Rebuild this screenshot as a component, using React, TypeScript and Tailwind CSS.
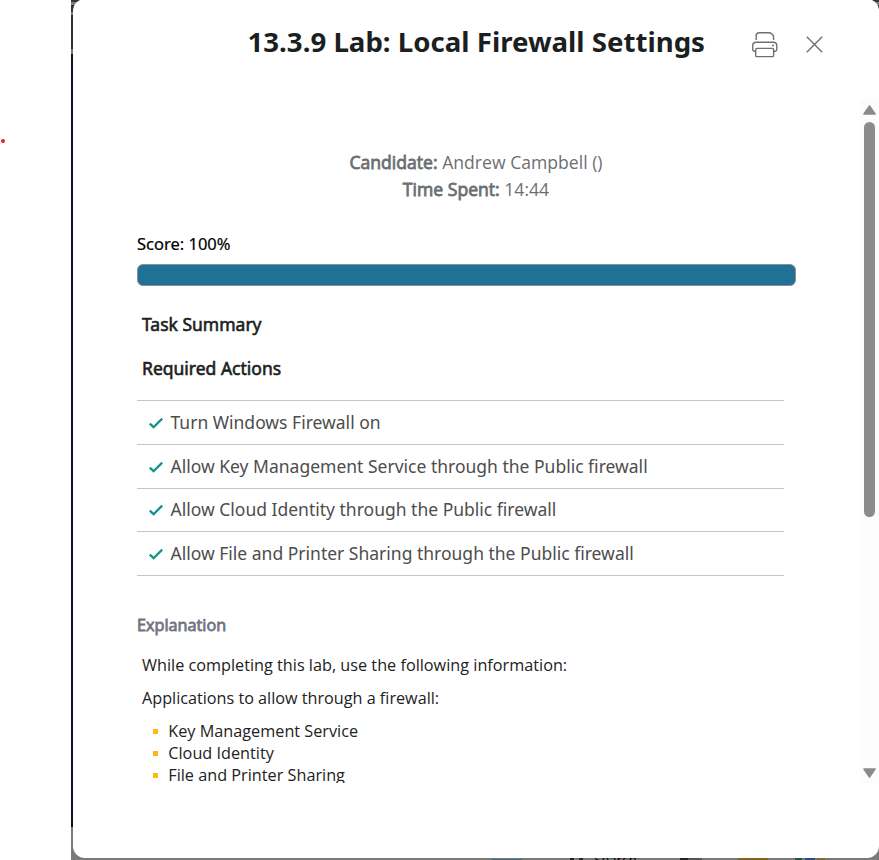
const actions = [
  { text: 'Turn Windows Firewall on', height: 'h-11', nudge: '' },
  { text: 'Allow Key Management Service through the Public firewall', height: 'h-11', nudge: '' },
  { text: 'Allow Cloud Identity through the Public firewall', height: 'h-[43px]', nudge: 'pb-px' },
  { text: 'Allow File and Printer Sharing through the Public firewall', height: 'h-11', nudge: '' },
];

const applications = ['Key Management Service', 'Cloud Identity', 'File and Printer Sharing'];

function PrinterIcon() {
  return (
    <svg className="h-[26px] w-[26px]" viewBox="0 0 26 26" fill="none" stroke="#6c7074" strokeWidth="1.4">
      <path d="M4.2 8V3.5Q4.2.7 7 .7H17.2Q18.6.7 19.6 1.7L20.7 2.8Q21.6 3.7 21.6 5V8" />
      <path d="M3.6 19.2H2.4Q.7 19.2.7 17.5V13.7Q.7 10.3 4.1 10.3H21.4Q24.8 10.3 24.8 13.7V17.5Q24.8 19.2 23.1 19.2H22" />
      <rect x="3.7" y="16.4" width="17.9" height="8.2" rx="1.2" />
      <circle cx="21" cy="13.5" r="1" fill="#6c7074" stroke="none" />
    </svg>
  );
}

function Header() {
  return (
    <header className="flex h-[99px] shrink-0 items-start">
      <h1 className="ml-[174.5px] mt-[21px] w-[504.5px] whitespace-nowrap text-[27.63px] font-bold leading-10 text-[#1b1f22]">
        13.3.9 Lab: Local Firewall Settings
      </h1>
      <button className="mt-8" aria-label="Print">
        <PrinterIcon />
      </button>
      <button className="ml-7 mt-9" aria-label="Close">
        <svg className="h-[17px] w-[17px]" viewBox="0 0 17 17" fill="none" stroke="#6c7074" strokeWidth="1.4">
          <path d="M.8.8 16.2 16.2M16.2.8.8 16.2" />
        </svg>
      </button>
    </header>
  );
}

function Scrollbar() {
  return (
    <div className="flex w-[19px] shrink-0 flex-col items-start bg-[#fcfcfc] pl-[3px]">
      <svg className="mt-[6px] h-[11px] w-[13px]" viewBox="0 0 13 11">
        <path d="M6.5 1 12 9H1Z" fill="#8b8b8b" stroke="#8b8b8b" strokeWidth="1.6" strokeLinejoin="round" />
      </svg>
      <div className="ml-px mt-[6px] h-[395px] w-[11px] rounded-full bg-[#8b8b8b]" />
      <svg className="mt-[250px] h-[11px] w-[13px]" viewBox="0 0 13 11">
        <path d="M6.5 10 12 2H1Z" fill="#8b8b8b" stroke="#8b8b8b" strokeWidth="1.6" strokeLinejoin="round" />
      </svg>
    </div>
  );
}

function Report() {
  return (
    <div className="flex-1 overflow-hidden whitespace-nowrap pl-16">
      <div className="mt-[50px] w-[678px] text-center font-['Open_Sans',sans-serif] text-[17.6px] leading-[27px] text-[#6b6f73]">
        <p>
          <span className="[-webkit-text-stroke:0.8px]">Candidate:</span> Andrew Campbell ()
        </p>
        <p>
          <span className="[-webkit-text-stroke:0.8px]">Time Spent:</span> 14:44
        </p>
      </div>
      <p className="mt-[29px] text-[16.5px] leading-6 text-black [-webkit-text-stroke:0.2px]">Score: 100%</p>
      <div className="mt-[8px] h-[22px] w-[659px] rounded-md border border-[#8b8f93] bg-[#217096]" />
      <h2 className="ml-[5px] mt-[26px] text-[17.5px] leading-6 text-[#1b1f22] [-webkit-text-stroke:0.6px]">Task Summary</h2>
      <h3 className="ml-[5px] mt-5 text-[17.5px] leading-6 text-[#1b1f22] [-webkit-text-stroke:0.6px]">Required Actions</h3>
      <ul className="mt-5 w-[647px] border-t border-[#c6c6c6]">
        {actions.map((action) => (
          <li key={action.text} className={`flex items-center border-b border-[#c6c6c6] pl-3 text-[17.5px] text-[#4d4d4d] ${action.height} ${action.nudge}`}>
            <svg className="mr-[7.5px] h-3 w-[14px]" viewBox="0 0 14 12" fill="none" stroke="#15918c" strokeWidth="2.3">
              <path d="M.8 6.6 4.6 10.2 13.2 1.6" />
            </svg>
            {action.text}
          </li>
        ))}
      </ul>
      <div className="font-['Open_Sans',sans-serif] text-[16.24px] text-[#222]">
        <h3 className="mt-[37px] leading-6 text-[#6f7480] [-webkit-text-stroke:0.8px]">Explanation</h3>
        <p className="ml-[5px] mt-4 leading-6">While completing this lab, use the following information:</p>
        <p className="ml-[5px] mt-[9px] text-[16.2px] leading-6">Applications to allow through a firewall:</p>
        <ul className="mt-[10px]">
          {applications.map((name) => (
            <li key={name} className="flex h-[22px] items-center pl-[15.5px]">
              <span className="mr-[10.8px] h-[5px] w-[5px] bg-[#fdb913]" />
              {name}
            </li>
          ))}
        </ul>
      </div>
    </div>
  );
}

export default function App() {
  return (
    <div className="flex h-[860px] w-[879px] overflow-hidden bg-white font-['Noto_Sans',sans-serif]">
      <aside className="w-[71px] shrink-0 pt-[139px]">
        <div className="ml-px h-1 w-1 rounded-full bg-[#ef1c24]" />
      </aside>
      <div className="relative w-[808px] bg-[linear-gradient(#343638_0_2px,#808386_2px_5px,#303438_5px_12px,#777b7e_12px_15px,#293238_15px_49px,#747779_49px_54px,#0a141f_54px_827px,#7a7a7b_827px)]">
        <div className="absolute inset-x-0 bottom-0 flex h-[2px]">
          <div className="ml-[421px] h-px w-[30px] self-end bg-[#456b7e]" />
          <div className="ml-[48px] h-[2px] w-1 bg-[#242326]" />
          <div className="ml-[5px] h-[2px] w-1 bg-[#242326]" />
          <div className="ml-[11px] h-[2px] w-[43px] overflow-hidden text-[13.5px] leading-[14px] text-black">
            <p className="-mt-[5px]">Search</p>
          </div>
          <div className="ml-[43px] w-2 bg-[#242326]" />
          <div className="w-[14px] bg-[#555557]" />
          <div className="ml-9 w-[30px] bg-[#816621]" />
          <div className="ml-[27px] w-[7px] bg-[#175a3c]" />
          <div className="ml-[3px] w-[10px] bg-[#2b4b82]" />
          <div className="ml-[2px] w-[8px] bg-[#816b30]" />
        </div>
        <main className="relative -mt-px ml-[2px] flex h-[859px] flex-col overflow-hidden rounded-[12px] bg-white pt-px">
          <Header />
          <div className="flex h-[684px]">
            <Report />
            <Scrollbar />
          </div>
        </main>
      </div>
    </div>
  );
}
